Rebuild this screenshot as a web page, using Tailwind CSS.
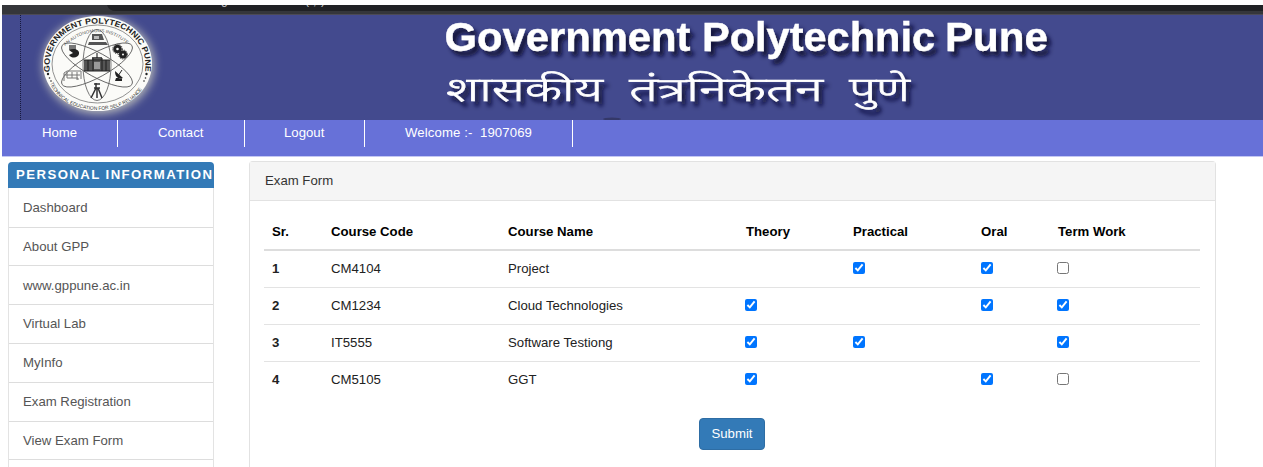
<!DOCTYPE html>
<html lang="en">
<head>
<meta charset="utf-8">
<title>Exam Form</title>
<script src="https://cdn.jsdelivr.net/npm/@tailwindcss/browser@4"></script>
</head>
<body class="h-[467px] overflow-hidden bg-white pl-[2px] pt-[5px] font-['Liberation_Sans',Arial,sans-serif] text-[13.2px] leading-[18px] text-[#333]">
<div class="flex h-[10px] bg-[#35363a]">
  <svg class="h-[10px] w-full" viewBox="2 5 1261 10" preserveAspectRatio="none">
    <path d="M107 5Q109 11 116 11H1263V5Z" fill="#202124"/>
    <text x="221" y="3.500" font-size="12" fill="#c8c9cc">g</text>
    <text x="305" y="3.500" font-size="12" fill="#c8c9cc">(</text>
    <text x="313" y="4.500" font-size="12" fill="#c8c9cc">,</text>
    <text x="321" y="3.500" font-size="12" fill="#c8c9cc">)</text>
    <path d="M2 14.500H1263" stroke="#4c4a55"/>
  </svg>
</div>
<header class="h-[105px] bg-[#434a8e]">
  <svg class="block h-[105px] w-[1261px]" viewBox="2 15 1261 105">
    <defs>
      <filter id="glow" x="-30%" y="-30%" width="160%" height="160%"><feGaussianBlur stdDeviation="4.500"/></filter>
      <filter id="shade" x="-5%" y="-30%" width="110%" height="170%"><feDropShadow dx="4" dy="5" stdDeviation="2" flood-color="#0c0e30" flood-opacity=".95"/></filter>
      <path id="ringOuter" d="M50 72C46.500 43 68 23.500 97.500 23.500S148.500 43 145 72"/>
      <path id="ringInner" d="M65 46Q97.500 18 130 46"/>
      <path id="ringBottom" d="M50 83C64 119 131 119 145 83"/>
    </defs>
    <path d="M20.500 15V120" stroke="#15183c" stroke-dasharray="1 1"/>
    <ellipse cx="98.500" cy="65" rx="56" ry="49" fill="#d9d9c4" opacity=".75" filter="url(#glow)"/>
    <ellipse cx="97.500" cy="63.500" rx="54.500" ry="47.500" fill="#fbfbf8"/>
    <ellipse cx="97.500" cy="64" rx="45.500" ry="39" fill="none" stroke="#777" stroke-width=".8"/>
    <g font-family="Liberation Sans,Arial,sans-serif" fill="#222">
      <text font-size="8" font-weight="700"><textPath href="#ringOuter" textLength="155" lengthAdjust="spacingAndGlyphs">GOVERNMENT POLYTECHNIC PUNE</textPath></text>
      <text font-size="4.300" fill="#555"><textPath href="#ringInner" textLength="69" lengthAdjust="spacingAndGlyphs">AN AUTONOMOUS INSTITUTE</textPath></text>
      <text font-size="5" fill="#333"><textPath href="#ringBottom" textLength="109" lengthAdjust="spacingAndGlyphs">TECHNICAL EDUCATION FOR SELF RELIANCE</textPath></text>
    </g>
    <g fill="#222"><circle cx="48" cy="74" r="1.200"/><circle cx="49.500" cy="78" r=".8"/><circle cx="51" cy="81" r=".8"/><circle cx="146.500" cy="74" r="1.200"/><circle cx="145.500" cy="78" r=".8"/><circle cx="144" cy="81" r=".8"/></g>
    <g fill="none" stroke="#555" stroke-width=".8">
      <ellipse cx="97" cy="65" rx="14" ry="35.500"/>
      <ellipse cx="97" cy="65" rx="12" ry="40" transform="rotate(-61 97 65)"/>
      <ellipse cx="97" cy="65" rx="12" ry="40" transform="rotate(61 97 65)"/>
    </g>
    <path d="M84 60h8v-3h10v3h8v11h-26z" fill="#555"/>
    <path d="M97 53v5M88 60v11M93 58v13M102 58v13M106 60v11" stroke="#222" stroke-width="1.100"/>
    <path d="M94 62h6v7h-6z" fill="#999"/><path d="M84 60h26M84 71h26" stroke="#222"/>
    <path d="M92 34h10l2 6H92zM89 42h17l2 3H88z" fill="#555"/><path d="M94 36h5v3h-5z" fill="#bbb"/>
    <path d="M69 45h7v5h-7z" fill="#777"/><path d="M69 50c4-2 11-1 10 4-1 4-7 5-10 1l4-2z" fill="#222"/>
    <g fill="none" stroke="#222" stroke-width="3"><circle cx="117.500" cy="49" r="2.800"/><circle cx="123" cy="54.500" r="2.500"/></g>
    <g fill="none" stroke="#222" stroke-width="1" stroke-dasharray="1 1.200"><circle cx="117.500" cy="49" r="4.800"/><circle cx="123" cy="54.500" r="4.500"/></g>
    <path d="M64 73l3-2h14v8M64 73v8M67 72v6h11v2M72 72v6M77 72v8M64 75h16" fill="none" stroke="#777"/>
    <path d="M115 71c0 7 4 8 8 7zM116 78h6v3h-7z" fill="#222"/><path d="M118 76l4-6" stroke="#222"/>
    <path d="M96 83v5l-5 10M97 88v10M98 88l4 10M94 84h6M94 88h6" fill="none" stroke="#333" stroke-width="1.500"/>
    <g filter="url(#shade)" fill="#fff">
      <g font-family="Liberation Sans,Arial,sans-serif" font-weight="700" font-size="40" stroke="#fff" stroke-width=".3">
        <text x="444.500" y="51" textLength="246" lengthAdjust="spacingAndGlyphs">Government</text>
        <text x="702" y="51" textLength="233" lengthAdjust="spacingAndGlyphs">Polytechnic</text>
        <text x="945" y="51" textLength="103" lengthAdjust="spacingAndGlyphs">Pune</text>
      </g>
      <g font-family="Noto Sans,Noto Sans Devanagari,Lohit Devanagari,sans-serif" font-size="33" font-weight="300" stroke="#fff" stroke-width=".6">
        <text x="446" y="101" textLength="157" lengthAdjust="spacingAndGlyphs">शासकीय</text>
        <text x="629" y="101" textLength="194" lengthAdjust="spacingAndGlyphs">तंत्रनिकेतन</text>
        <text x="849" y="101" textLength="61" lengthAdjust="spacingAndGlyphs">पुणे</text>
      </g>
    </g>
    <ellipse cx="612" cy="119" rx="9" ry="1.500" fill="#343868"/>
  </svg>
</header>
<nav class="flex h-[37px] border-b border-[#c3c7f3] bg-[#6771d8] text-white">
  <div class="h-[27px] w-[116px] border-r border-white pl-[40px] pt-[4px]">Home</div>
  <div class="h-[27px] w-[127px] border-r border-white pl-[40px] pt-[4px]">Contact</div>
  <div class="h-[27px] w-[120px] border-r border-white pl-[39px] pt-[4px]">Logout</div>
  <div class="h-[27px] w-[208px] whitespace-pre border-r border-white pl-[40px] pt-[4px] tracking-[0.100px]">Welcome :-  1907069</div>
</nav>
<main class="flex h-[310px] items-start overflow-hidden pl-[6px] pt-[5px]">
  <aside class="h-[305px] w-[206px] overflow-hidden rounded-t-[4px] text-[#555]">
    <h2 class="h-[26px] whitespace-nowrap bg-[#337ab7] pl-[8px] pt-[4px] font-bold tracking-[1.430px] text-white">PERSONAL INFORMATION</h2>
    <ul class="border-x border-[#e3e3e3]">
      <li class="h-[40px] border-b border-[#ddd] pl-[14px] pt-[11px]">Dashboard</li>
      <li class="h-[38px] border-b border-[#ddd] pl-[14px] pt-[10px]">About GPP</li>
      <li class="h-[39px] border-b border-[#ddd] pl-[14px] pt-[11px]">www.gppune.ac.in</li>
      <li class="h-[39px] border-b border-[#ddd] pl-[14px] pt-[10px]">Virtual Lab</li>
      <li class="h-[39px] border-b border-[#ddd] pl-[14px] pt-[10px]">MyInfo</li>
      <li class="h-[39px] border-b border-[#ddd] pl-[14px] pt-[10px]">Exam Registration</li>
      <li class="h-[38px] border-b border-[#ddd] pl-[14px] pt-[10px]">View Exam Form</li>
      <li class="h-[7px]"></li>
    </ul>
  </aside>
  <section class="ml-[35px] mt-[-1px] h-[306px] w-[967px] rounded-t-[4px] border border-b-0 border-[#e2e2e2]">
    <h1 class="h-[39px] border-b border-[#e2e2e2] bg-[#f5f5f5] pl-[15px] pt-[10px]">Exam Form</h1>
    <div class="pl-[14px] pr-[15px] pt-[13px]">
      <table class="w-full table-fixed text-left text-[#222]">
        <colgroup><col class="w-[59px]"><col class="w-[177px]"><col class="w-[238px]"><col class="w-[107px]"><col class="w-[128px]"><col class="w-[77px]"><col></colgroup>
        <thead>
          <tr class="h-[36px] border-b-2 border-[#ddd] text-black">
            <th class="px-2">Sr.</th><th class="px-2">Course Code</th><th class="px-2">Course Name</th><th class="px-2">Theory</th><th class="px-2">Practical</th><th class="px-2">Oral</th><th class="px-2">Term Work</th>
          </tr>
        </thead>
        <tbody>
          <tr class="h-[37px]"><th class="px-2">1</th><td class="px-2">CM4104</td><td class="px-2">Project</td><td class="px-2"></td><td class="px-2"><input type="checkbox" checked class="mb-px block size-[12px]"></td><td class="px-2"><input type="checkbox" checked class="mb-px block size-[12px]"></td><td class="pl-[7px]"><input type="checkbox" class="mb-px block size-[12px]"></td></tr>
          <tr class="h-[37px] border-t border-[#e3e3e3]"><th class="px-2">2</th><td class="px-2">CM1234</td><td class="px-2">Cloud Technologies</td><td class="pl-[7px]"><input type="checkbox" checked class="mb-px block size-[12px]"></td><td class="px-2"></td><td class="px-2"><input type="checkbox" checked class="mb-px block size-[12px]"></td><td class="pl-[7px]"><input type="checkbox" checked class="mb-px block size-[12px]"></td></tr>
          <tr class="h-[37px] border-t border-[#e3e3e3]"><th class="px-2">3</th><td class="px-2">IT5555</td><td class="px-2">Software Testiong</td><td class="pl-[7px]"><input type="checkbox" checked class="mb-px block size-[12px]"></td><td class="px-2"><input type="checkbox" checked class="mb-px block size-[12px]"></td><td class="px-2"></td><td class="pl-[7px]"><input type="checkbox" checked class="mb-px block size-[12px]"></td></tr>
          <tr class="h-[37px] border-t border-[#e3e3e3]"><th class="px-2">4</th><td class="px-2">CM5105</td><td class="px-2">GGT</td><td class="pl-[7px]"><input type="checkbox" checked class="mb-px block size-[12px]"></td><td class="px-2"></td><td class="px-2"><input type="checkbox" checked class="mb-px block size-[12px]"></td><td class="pl-[7px]"><input type="checkbox" class="mb-px block size-[12px]"></td></tr>
        </tbody>
      </table>
      <button class="mx-auto mt-[20px] block h-[32px] w-[66px] rounded-[4px] border border-[#2e6da4] bg-[#337ab7] pb-px text-white">Submit</button>
    </div>
  </section>
</main>
</body>
</html>
